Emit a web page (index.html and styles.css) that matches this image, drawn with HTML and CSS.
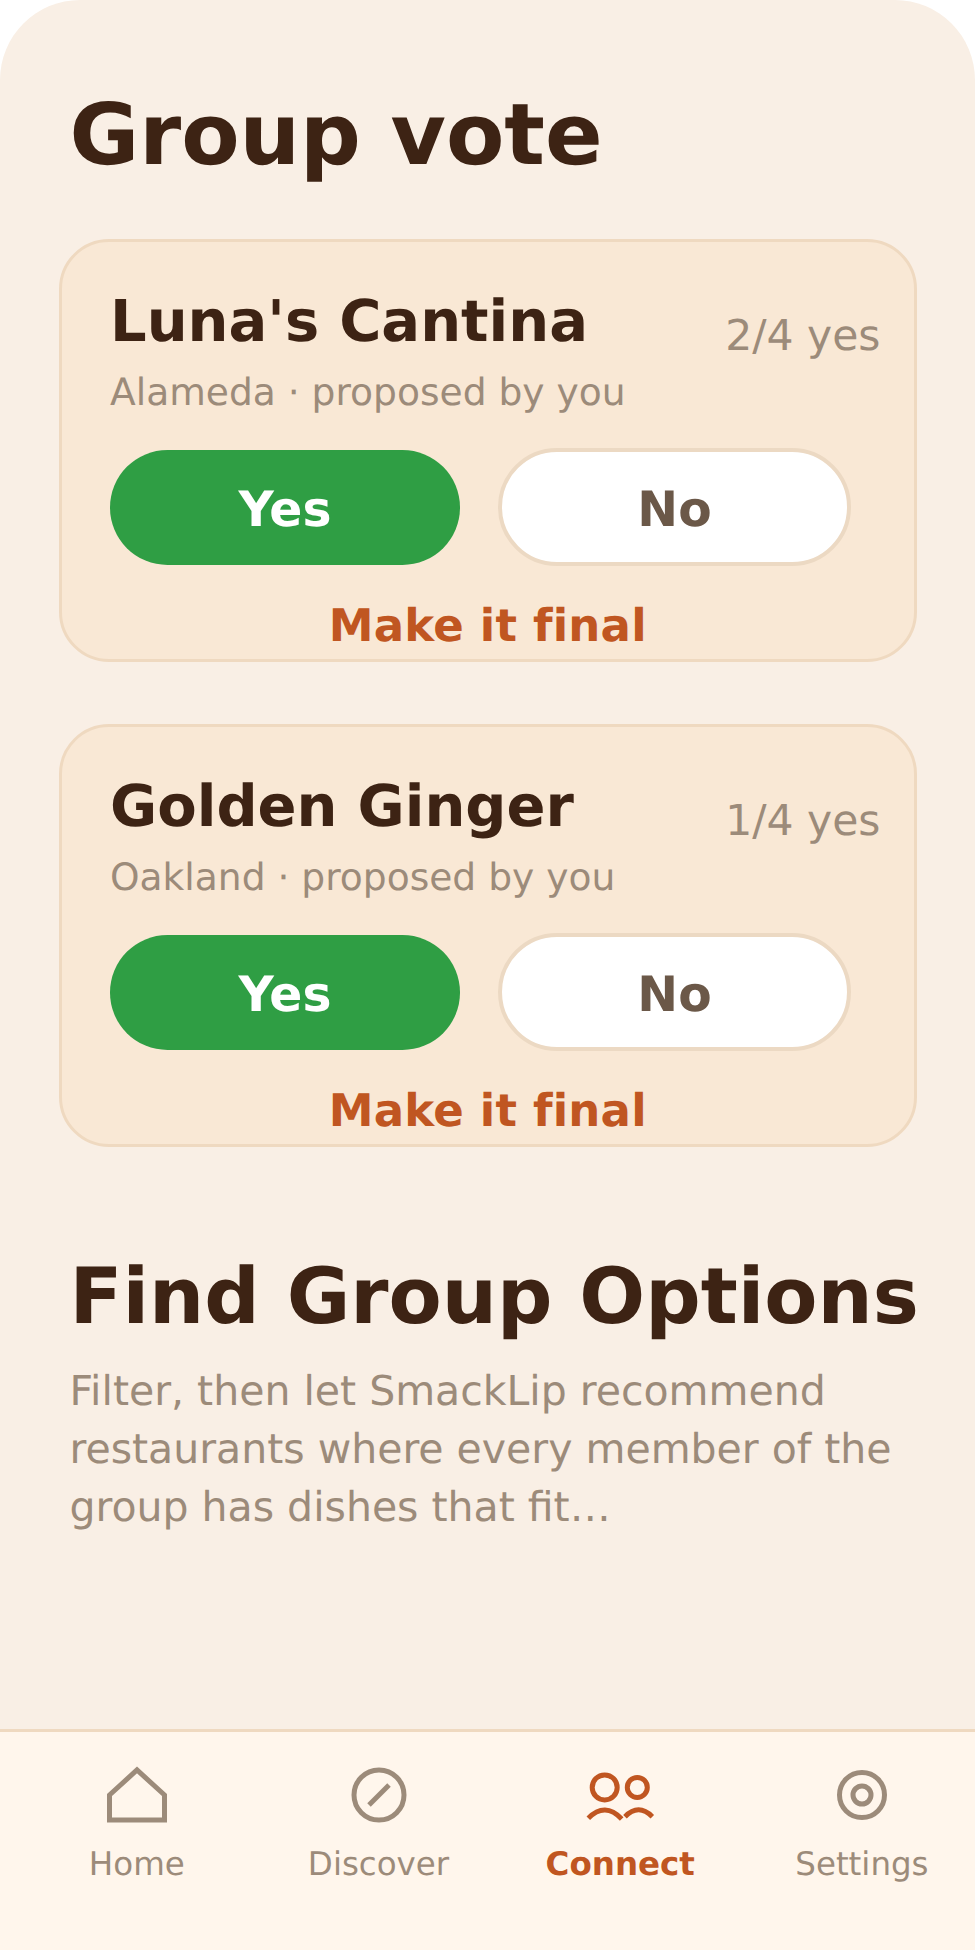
FILE: index.html
```html
<!DOCTYPE html>
<html lang="en">
<head>
    <meta charset="UTF-8">
    <meta name="viewport" content="width=device-width, initial-scale=1.0">
    <title>Group vote</title>
    <link rel="stylesheet" href="styles.css">
</head>
<body>
    <div class="screen">
        <main class="content">
            <h1 class="page-title">Group vote</h1>

            <div class="vote-card">
                <div class="card-head">
                    <div>
                        <h2 class="place-name">Luna's Cantina</h2>
                        <p class="place-meta">Alameda · proposed by you</p>
                    </div>
                    <span class="tally">2/4 yes</span>
                </div>
                <div class="vote-buttons">
                    <button class="btn btn-yes">Yes</button>
                    <button class="btn btn-no">No</button>
                </div>
                <div class="make-final">Make it final</div>
            </div>

            <div class="vote-card">
                <div class="card-head">
                    <div>
                        <h2 class="place-name">Golden Ginger</h2>
                        <p class="place-meta">Oakland · proposed by you</p>
                    </div>
                    <span class="tally">1/4 yes</span>
                </div>
                <div class="vote-buttons">
                    <button class="btn btn-yes">Yes</button>
                    <button class="btn btn-no">No</button>
                </div>
                <div class="make-final">Make it final</div>
            </div>

            <h1 class="options-title">Find Group Options</h1>
            <p class="options-text">Filter, then let SmackLip recommend restaurants where every member of the group has dishes that fit…</p>
        </main>

        <nav class="tab-bar">
            <div class="tab">
                <svg class="tab-icon" width="60" height="60" viewBox="0 0 60 60" fill="none" stroke="currentColor" stroke-width="5">
                    <path d="M2.5 30 L30 5 L57.5 30 V55 H2.5 Z"/>
                </svg>
                <span>Home</span>
            </div>
            <div class="tab">
                <svg class="tab-icon" width="60" height="60" viewBox="0 0 60 60" fill="none" stroke="currentColor" stroke-width="5">
                    <circle cx="30" cy="30" r="25"/>
                    <path d="M20 40 L40 20"/>
                </svg>
                <span>Discover</span>
            </div>
            <div class="tab tab-active">
                <svg class="tab-icon" width="72" height="60" viewBox="0 0 72 60" fill="none" stroke="currentColor" stroke-width="5">
                    <circle cx="20.7" cy="22.4" r="12.5"/>
                    <circle cx="53.3" cy="22.4" r="10"/>
                    <path d="M4.3 53.3 Q21 36.5 37.7 54"/>
                    <path d="M41 51.7 Q54.5 38 68.3 51.7"/>
                </svg>
                <span>Connect</span>
            </div>
            <div class="tab">
                <svg class="tab-icon" width="60" height="60" viewBox="0 0 60 60" fill="none" stroke="currentColor" stroke-width="5">
                    <circle cx="30" cy="30" r="22.5"/>
                    <circle cx="30" cy="30" r="9"/>
                </svg>
                <span>Settings</span>
            </div>
        </nav>
    </div>
</body>
</html>
```

FILE: styles.css
```css
* {
    box-sizing: border-box;
}
html, body {
    margin: 0;
    background: white;
}
body {
    font-family: "DejaVu Sans", sans-serif;
    text-rendering: geometricPrecision;
}
.screen {
    width: 975px;
    height: 1950px;
    background: #f9efe5;
    border-radius: 80px 80px 0 0;
    display: flex;
    flex-direction: column;
    overflow: hidden;
}
.content {
    flex: 1;
    padding: 91.5px 0 0 59px;
}
.page-title {
    margin: 0 0 59.5px 10.5px;
    font-size: 85px;
    line-height: 88px;
    font-weight: 700;
    color: #3d2314;
}
.vote-card {
    width: 857.5px;
    height: 422.5px;
    margin-bottom: 62.5px;
    padding: 48px 33px 0 48px;
    background: #f9e8d5;
    border: 3px solid #efd9c0;
    border-radius: 50px;
}
.card-head {
    display: flex;
    justify-content: space-between;
    align-items: center;
}
.place-name {
    margin: 0;
    font-size: 57.5px;
    line-height: 64px;
    font-weight: 700;
    color: #3d2314;
}
.place-meta {
    margin: 16px 0 0;
    font-size: 37.6px;
    line-height: 44px;
    color: #9c8b7a;
}
.tally {
    font-size: 42.5px;
    color: #9c8b7a;
    margin-bottom: 31px;
}
.vote-buttons {
    display: flex;
    align-items: center;
    gap: 38px;
    margin-top: 34px;
}
.btn {
    border-radius: 60px;
    font-family: inherit;
    font-size: 48.75px;
    font-weight: 700;
    padding: 6px 0 0;
    text-rendering: geometricPrecision;
}
.btn-yes {
    width: 350px;
    height: 115px;
    background: #2f9e44;
    border: none;
    color: white;
}
.btn-no {
    width: 353px;
    height: 118px;
    background: white;
    border: 4px solid #ecd9c3;
    color: #6b5848;
}
.make-final {
    margin: 35px 0 0 -15px;
    text-align: center;
    font-size: 45px;
    line-height: 50px;
    letter-spacing: 0.2px;
    font-weight: 700;
    color: #c05621;
}
.options-title {
    margin: 106.7px 0 22px 10.5px;
    font-size: 77.5px;
    line-height: 88px;
    font-weight: 700;
    color: #3d2314;
    white-space: nowrap;
}
.options-text {
    margin: 0 50px 0 10.5px;
    font-size: 41px;
    line-height: 57.75px;
    color: #9c8b7a;
}
.tab-bar {
    height: 221.5px;
    flex: none;
    display: flex;
    padding: 33px 0 0 16px;
    background: #fff6ec;
    border-top: 3px solid #efd9c0;
}
.tab {
    flex: 0 0 241.7px;
    display: flex;
    flex-direction: column;
    align-items: center;
    gap: 20px;
    font-size: 32.5px;
    color: #9c8b7a;
}
.tab-active {
    color: #c05621;
    font-weight: 700;
}
.tab-icon {
    display: block;
}
```
